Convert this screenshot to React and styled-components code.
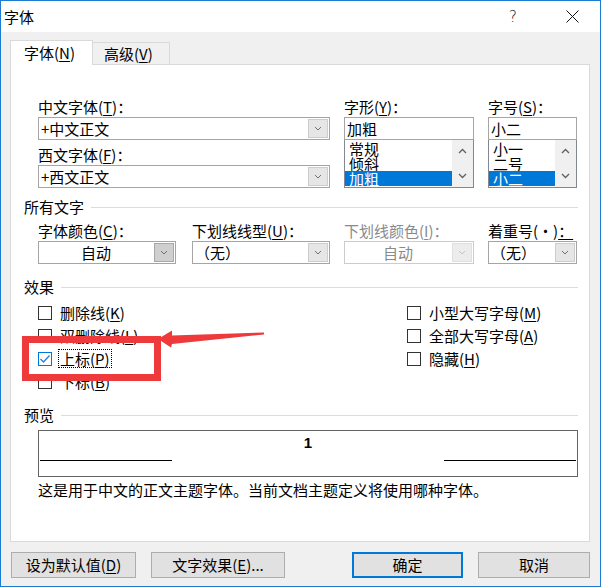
import React from 'react';
import styled, { createGlobalStyle } from 'styled-components';

const Global = createGlobalStyle`
  html, body { margin: 0; padding: 0; background: #ffffff; }
  body {
    font-family: "Noto Sans CJK SC", "Noto Sans", sans-serif;
    font-size: 15px;
    color: #000;
  }
  * { box-sizing: border-box; }
`;

const Window = styled.div`
  position: relative;
  width: 601px;
  height: 587px;
  border: 1px solid #1c7cd5;
  background: #f0f0f0;
  display: flex;
  flex-direction: column;
  overflow: hidden;
`;

const TitleBar = styled.div`
  height: 31px;
  flex: none;
  background: #ffffff;
  display: flex;
  align-items: center;
  padding-left: 3px;
  font-size: 15px;
  line-height: 20px;
`;

const TitleText = styled.div`
  flex: 1;
`;

const HelpButton = styled.div`
  width: 46px;
  margin-right: 8px;
  text-align: center;
  font-family: "DejaVu Sans", sans-serif;
  font-size: 15px;
  font-weight: 300;
  color: #111;
`;

const CloseButton = styled.div`
  width: 56px;
  height: 31px;
  display: flex;
  align-items: center;
  justify-content: center;
`;

const Body = styled.div`
  flex: 1;
  display: flex;
  flex-direction: column;
  padding: 8px 10px 8px 9px;
`;

const TabRow = styled.div`
  display: flex;
  align-items: flex-end;
  height: 25px;
  margin-bottom: -1px;
  position: relative;
  z-index: 1;
`;

const Tab = styled.div`
  height: ${p => (p.$active ? 25 : 22)}px;
  width: ${p => p.$w}px;
  margin-bottom: ${p => (p.$active ? 0 : 1)}px;
  background: ${p => (p.$active ? '#ffffff' : '#f0f0f0')};
  border: 1px solid #d9d9d9;
  border-bottom: none;
  border-left: ${p => (p.$active ? '1px solid #d9d9d9' : 'none')};
  padding-left: ${p => (p.$active ? 13 : 11)}px;
  line-height: ${p => (p.$active ? 23 : 21)}px;
  white-space: nowrap;
`;

const Key = styled.span`
  text-decoration: underline;
  text-underline-offset: 2px;
`;

const Panel = styled.div`
  height: 478px;
  flex: none;
  background: #ffffff;
  border: 1px solid #d9d9d9;
  padding: 31px 11px 0 27px;
  display: flex;
  flex-direction: column;
`;

const FontRow = styled.div`
  display: flex;
  gap: 14px;
`;

const Column = styled.div`
  width: ${p => p.$w}px;
  display: flex;
  flex-direction: column;
`;

const Label = styled.div`
  height: 21px;
  line-height: 21px;
  white-space: nowrap;
  margin-top: ${p => p.$mt || 0}px;
  padding-left: ${p => p.$indent || 0}px;
  color: ${p => (p.$disabled ? '#8a8a8a' : '#000')};
`;

const ComboFrame = styled.div`
  height: 23px;
  margin-left: ${p => p.$indent || 0}px;
  display: flex;
  background: #ffffff;
  border: 1px solid ${p => (p.$disabled ? '#cccccc' : '#a5a5a5')};
`;

const ComboText = styled.div`
  flex: 1;
  line-height: 21px;
  padding-left: ${p => (p.$center ? 0 : 2)}px;
  text-align: ${p => (p.$center ? 'center' : 'left')};
  color: ${p => (p.$disabled ? '#8a8a8a' : '#000')};
  white-space: nowrap;
  overflow: hidden;
`;

const DropButton = styled.div`
  width: 20px;
  margin: 1px;
  display: flex;
  align-items: center;
  justify-content: center;
  background: ${p => (p.$pressed ? '#cfcfcf' : p.$disabled ? '#ececec' : '#e6e6e6')};
  border: 1px solid ${p => (p.$pressed ? '#a8a8a8' : p.$disabled ? '#e0e0e0' : '#cdcdcd')};
`;

const Chevron = ({ up, color = '#606060' }) => (
  <svg width="9" height="6" viewBox="0 0 9 6">
    <polyline
      points={up ? '1,5 4.5,1.5 8,5' : '1,1 4.5,4.5 8,1'}
      fill="none"
      stroke={color}
      strokeWidth="1.3"
    />
  </svg>
);

const SmallChevron = ({ color = '#707070' }) => (
  <svg width="8" height="5" viewBox="0 0 8 5">
    <polyline points="1,1 4,4 7,1" fill="none" stroke={color} strokeWidth="1" />
  </svg>
);

const Combo = ({ value, center, pressed, disabled, indent }) => (
  <ComboFrame $disabled={disabled} $indent={indent}>
    <ComboText $center={center} $disabled={disabled}>{value}</ComboText>
    <DropButton $pressed={pressed} $disabled={disabled}>
      <SmallChevron color={disabled ? '#c4c4c4' : '#707070'} />
    </DropButton>
  </ComboFrame>
);

const TextBox = styled.div`
  height: 23px;
  border: 1px solid #a5a5a5;
  line-height: 21px;
  padding-left: 2px;
  background: #fff;
`;

const ListFrame = styled.div`
  height: 48px;
  border: 1px solid #828790;
  border-top: none;
  display: flex;
  background: #fff;
  overflow: hidden;
`;

const ListItems = styled.div`
  flex: 1;
  padding: 1px 0 0 0;
  display: flex;
  flex-direction: column;
`;

const ListItem = styled.div`
  height: 15px;
  line-height: 15px;
  padding-left: 4px;
  white-space: nowrap;
  background: ${p => (p.$selected ? '#0078d7' : 'transparent')};
  color: ${p => (p.$selected ? '#ffffff' : '#000')};
`;

const ScrollBar = styled.div`
  width: 21px;
  background: #f0f0f0;
  display: flex;
  flex-direction: column;
  justify-content: space-between;
`;

const ScrollArrow = styled.div`
  height: 22px;
  display: flex;
  align-items: center;
  justify-content: center;
`;

const ListBox = ({ items, selected }) => (
  <ListFrame>
    <ListItems>
      {items.map((t, i) => (
        <ListItem key={t} $selected={i === selected}>{t}</ListItem>
      ))}
    </ListItems>
    <ScrollBar>
      <ScrollArrow><Chevron up /></ScrollArrow>
      <ScrollArrow><Chevron /></ScrollArrow>
    </ScrollBar>
  </ListFrame>
);

const SectionHeader = styled.div`
  display: flex;
  align-items: center;
  gap: 7px;
  height: 20px;
  line-height: 20px;
  margin-left: -14px;
  margin-top: ${p => p.$mt}px;
  white-space: nowrap;
  &::after {
    content: '';
    flex: 1;
    border-top: 1px solid #dcdcdc;
  }
`;

const ColorRow = styled.div`
  display: grid;
  grid-template-columns: 138px 140px 130px 89px;
  column-gap: 14px;
  margin-top: 3px;
`;

const Field = styled.div`
  display: flex;
  flex-direction: column;
`;

const EffectsRow = styled.div`
  display: flex;
  margin-top: 4px;
`;

const EffectsColumn = styled.div`
  width: ${p => (p.$w ? `${p.$w}px` : 'auto')};
  display: flex;
  flex-direction: column;
`;

const CheckRow = styled.div`
  height: 23px;
  display: flex;
  align-items: center;
  white-space: nowrap;
`;

const Box = styled.div`
  width: 14px;
  height: 14px;
  flex: none;
  border: 1px solid ${p => (p.$checked ? '#0078d7' : '#333333')};
  background: #fff;
  display: flex;
  align-items: center;
  justify-content: center;
`;

const CheckLabel = styled.span`
  margin-left: ${p => (p.$focus ? 6 : 8)}px;
  line-height: 17px;
  padding: 0 ${p => (p.$focus ? 1 : 0)}px;
  border: ${p => (p.$focus ? '1px dotted #000' : 'none')};
`;

const Check = ({ checked, focus, children }) => (
  <CheckRow>
    <Box $checked={checked}>
      {checked && (
        <svg width="12" height="10" viewBox="0 0 12 10">
          <polyline points="1.5,5 4.5,8 10.5,1.5" fill="none" stroke="#2b7fd6" strokeWidth="1.4" />
        </svg>
      )}
    </Box>
    <CheckLabel $focus={focus}>{children}</CheckLabel>
  </CheckRow>
);

const PreviewBox = styled.div`
  height: 47px;
  margin-top: 5px;
  border: 1px solid #646464;
  background: #fff;
  display: grid;
  grid-template-columns: 132px 1fr 132px;
  padding: 0 1px;
`;

const PreviewLine = styled.div`
  align-self: end;
  margin-bottom: 15px;
  border-top: 1px solid #000;
`;

const PreviewSample = styled.div`
  justify-self: center;
  align-self: start;
  margin-top: 4px;
  font-family: "Liberation Sans", sans-serif;
  font-weight: bold;
  font-size: 15px;
  line-height: 15px;
`;

const Description = styled.div`
  margin-top: 3px;
  height: 20px;
  line-height: 20px;
  white-space: nowrap;
`;

const ButtonRow = styled.div`
  display: flex;
  margin-top: 10px;
  height: 26px;
`;

const Button = styled.div`
  width: ${p => p.$w}px;
  height: 26px;
  margin-left: ${p => p.$ml || 0}px;
  background: #e1e1e1;
  border: ${p => (p.$default ? '2px solid #0078d7' : '1px solid #adadad')};
  display: flex;
  align-items: center;
  justify-content: center;
  white-space: nowrap;
  line-height: 20px;
`;

const Spacer = styled.div`
  flex: 1;
`;

const Highlight = styled.div`
  position: absolute;
  left: 21px;
  top: 335px;
  width: 139px;
  height: 45px;
  border: 7px solid #ee3a3a;
  pointer-events: none;
`;

const ArrowSvg = styled.svg`
  position: absolute;
  left: 149px;
  top: 324px;
  pointer-events: none;
`;

export default function App() {
  return (
    <>
      <Global />
      <Window>
        <TitleBar>
          <TitleText>字体</TitleText>
          <HelpButton>?</HelpButton>
          <CloseButton>
            <svg width="13" height="13" viewBox="0 0 13 13">
              <path d="M0.5 0.5 L12.5 12.5 M12.5 0.5 L0.5 12.5" stroke="#111" strokeWidth="1" />
            </svg>
          </CloseButton>
        </TitleBar>
        <Body>
          <TabRow>
            <Tab $active $w={83}>字体(<Key>N</Key>)</Tab>
            <Tab $w={77}>高级(<Key>V</Key>)</Tab>
          </TabRow>
          <Panel>
            <FontRow>
              <Column $w={292}>
                <Label>中文字体(<Key>T</Key>)：</Label>
                <Combo value="+中文正文" />
                <Label $mt={4}>西文字体(<Key>F</Key>)：</Label>
                <Combo value="+西文正文" />
              </Column>
              <Column $w={130}>
                <Label>字形(<Key>Y</Key>)：</Label>
                <TextBox>加粗</TextBox>
                <ListBox items={['常规', '倾斜', '加粗']} selected={2} />
              </Column>
              <Column $w={89}>
                <Label>字号(<Key>S</Key>)：</Label>
                <TextBox>小二</TextBox>
                <ListBox items={['小一', '二号', '小二']} selected={2} />
              </Column>
            </FontRow>

            <SectionHeader $mt={9}>所有文字</SectionHeader>
            <ColorRow>
              <Field>
                <Label>字体颜色(<Key>C</Key>)：</Label>
                <Combo value="自动" center pressed />
              </Field>
              <Field>
                <Label $indent={2}>下划线线型(<Key>U</Key>)：</Label>
                <Combo value="（无）" indent={2} />
              </Field>
              <Field>
                <Label $disabled>下划线颜色(<Key>I</Key>)：</Label>
                <Combo value="自动" center disabled />
              </Field>
              <Field>
                <Label>着重号(·)<Key>：</Key></Label>
                <Combo value="（无）" />
              </Field>
            </ColorRow>

            <SectionHeader $mt={13}>效果</SectionHeader>
            <EffectsRow>
              <EffectsColumn $w={369}>
                <Check>删除线(<Key>K</Key>)</Check>
                <Check>双删除线(<Key>L</Key>)</Check>
                <Check checked focus>上标(<Key>P</Key>)</Check>
                <Check>下标(<Key>B</Key>)</Check>
              </EffectsColumn>
              <EffectsColumn>
                <Check>小型大写字母(<Key>M</Key>)</Check>
                <Check>全部大写字母(<Key>A</Key>)</Check>
                <Check>隐藏(<Key>H</Key>)</Check>
              </EffectsColumn>
            </EffectsRow>

            <SectionHeader $mt={12}>预览</SectionHeader>
            <PreviewBox>
              <PreviewLine />
              <PreviewSample>1</PreviewSample>
              <PreviewLine />
            </PreviewBox>
            <Description>这是用于中文的正文主题字体。当前文档主题定义将使用哪种字体。</Description>
          </Panel>
          <ButtonRow>
            <Button $w={125} $ml={1}>设为默认值(<Key>D</Key>)</Button>
            <Button $w={134} $ml={15}>文字效果(<Key>E</Key>)...</Button>
            <Spacer />
            <Button $w={111} $default>确定</Button>
            <Button $w={112} $ml={15}>取消</Button>
          </ButtonRow>
        </Body>
        <Highlight />
        <ArrowSvg width="120" height="30" viewBox="150 325 120 30">
          <polygon
            points="158,339 172,330.5 172,335.5 264,332.5 264,334.5 172,344 171,347.5"
            fill="#ee3a3a"
          />
        </ArrowSvg>
      </Window>
    </>
  );
}
